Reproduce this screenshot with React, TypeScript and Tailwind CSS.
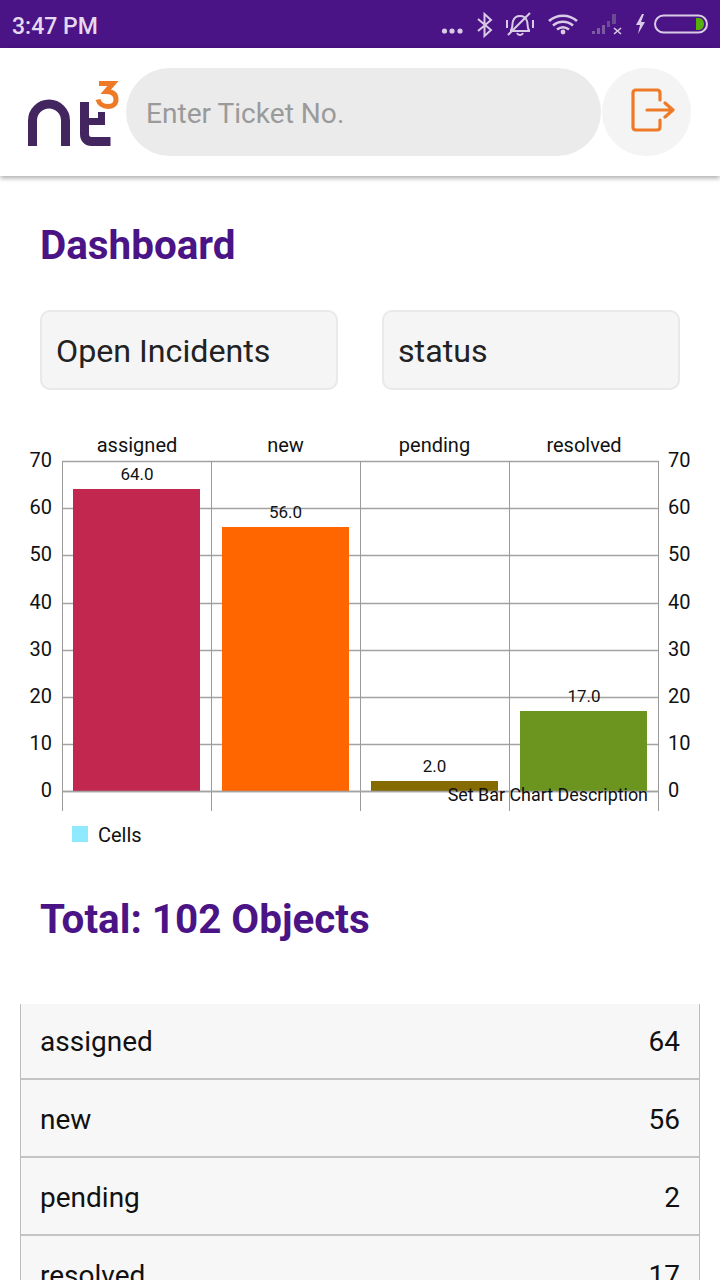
import React from "react";

const grid = [461, 508, 555, 603, 650, 697, 744, 791];
const vals = ["70", "60", "50", "40", "30", "20", "10", "0"];
const vlines = [62.5, 211.5, 360.5, 509.5, 658.5];
const cats = [
  { name: "assigned", cx: 137, x: 73, top: 489, color: "#c2284f", label: "64.0", ly: 480 },
  { name: "new", cx: 285.5, x: 222, top: 527, color: "#ff6600", label: "56.0", ly: 518 },
  { name: "pending", cx: 434.5, x: 371, top: 781, color: "#856a00", label: "2.0", ly: 772 },
  { name: "resolved", cx: 584, x: 520, top: 711, color: "#6b951f", label: "17.0", ly: 702 },
];
const rows: [string, string][] = [
  ["assigned", "64"],
  ["new", "56"],
  ["pending", "2"],
  ["resolved", "17"],
];

function StatusIcons() {
  return (
    <svg width="300" height="48" viewBox="420 0 300 48" fill="none" className="block shrink-0">
      <circle cx="444.5" cy="31" r="2.6" fill="#d9cbe6" />
      <circle cx="452" cy="31" r="2.6" fill="#d9cbe6" />
      <circle cx="460" cy="31" r="2.6" fill="#d9cbe6" />
      <path d="M478 19l13 11-6.500 6V14l6.500 6-13 11" stroke="#d9cbe6" strokeWidth="2" />
      <path d="M511 30c2-2 1-6 2-9 1-3 4-5 7-5s6 2 7 5c1 3 0 7 2 9v1h-18zM517 33c1 2.500 5 2.500 6 0" stroke="#d9cbe6" strokeWidth="2" />
      <path d="M508 35L530 13" stroke="#d9cbe6" strokeWidth="2" />
      <path d="M507 20v8M533 20v8" stroke="#d9cbe6" strokeWidth="2" />
      <path d="M549 21c8-7 20-7 28 0M553 25.500c6-5 14-5 20 0M557 29.500c4-3 8-3 12 0" stroke="#d9cbe6" strokeWidth="2.600" />
      <circle cx="563" cy="32" r="2.400" fill="#d9cbe6" />
      <path d="M592 34h3v-3h-3zM597 34h3v-6h-3zM602 34h3v-9h-3z" fill="#7a5aa0" />
      <path d="M607 27h3v-6h-3v6zM612 24h4v-10h-4z" fill="#6b4a94" />
      <path d="M614 28l7 6M621 28l-7 6" stroke="#d9cbe6" strokeWidth="1.600" />
      <path d="M642 14l-6 11h4l-2 9 7-12h-4l3-8z" fill="#d9cbe6" />
      <rect x="655" y="15.500" width="52" height="17" rx="8.500" stroke="#d9cbe6" strokeWidth="2" />
      <path d="M696 18h3c3 0 5 3 5 6s-2 6-5 6h-3z" fill="#56b00c" />
    </svg>
  );
}

function Logo() {
  return (
    <svg width="100" height="80" viewBox="26 72 100 80" fill="none" className="shrink-0">
      <path d="M32.500 146v-25.500a16.500 16.500 0 0 1 33 0V146" stroke="#43265f" strokeWidth="9" />
      <path d="M84.500 102v32c0 5 3 7.500 7 7.500h19" stroke="#43265f" strokeWidth="9" />
      <path d="M87 121.500h14.500V112" stroke="#43265f" strokeWidth="7" />
      <path d="M99 83.500h14l-7 8c7 0 10 3 10 8 0 5-4 7-8 7-5 0-9-3-10-7" stroke="#ee7a27" strokeWidth="5" />
    </svg>
  );
}

function Chart() {
  return (
    <svg width="720" height="430" viewBox="0 430 720 430" className="block" fontFamily="Roboto, sans-serif">
      {grid.map((y) => (
        <line key={y} x1="62" x2="659" y1={y + 0.5} y2={y + 0.5} stroke="#a3a3a3" strokeWidth="1.500" />
      ))}
      {vlines.map((x) => (
        <line key={x} x1={x} x2={x} y1="461" y2="811" stroke="#9a9a9a" strokeWidth="1" />
      ))}
      {cats.map((c) => (
        <rect key={c.name} x={c.x} y={c.top} width="127" height={791 - c.top} fill={c.color} />
      ))}
      <line x1="62" x2="659" y1="791.500" y2="791.500" stroke="#a3a3a3" strokeWidth="1.500" />
      {cats.map((c) => (
        <text key={c.name} x={c.cx} y="452" textAnchor="middle" fontSize="20" fill="#111">{c.name}</text>
      ))}
      {cats.map((c) => (
        <text key={c.name} x={c.cx} y={c.ly} textAnchor="middle" fontSize="17" fill="#111">{c.label}</text>
      ))}
      {grid.map((y, i) => (
        <text key={y} x="52" y={y + 6} textAnchor="end" fontSize="20" fill="#111">{vals[i]}</text>
      ))}
      {grid.map((y, i) => (
        <text key={y} x="668" y={y + 6} fontSize="20" fill="#111">{vals[i]}</text>
      ))}
      <text x="648" y="801" textAnchor="end" fontSize="17.900" fill="#111">Set Bar Chart Description</text>
      <rect x="72" y="826" width="16" height="16" fill="#8fe9ff" />
      <text x="98" y="842" fontSize="20" fill="#111">Cells</text>
    </svg>
  );
}

export default function App() {
  return (
    <div className="w-[720px] h-[1280px] overflow-hidden bg-white font-['Roboto',sans-serif]">
      <div className="h-12 bg-[#4a1486] flex items-center justify-between pl-3 overflow-hidden">
        <span className="pt-[6px] text-[23px] font-medium text-[#e4d9ee] whitespace-nowrap">3:47 PM</span>
        <StatusIcons />
      </div>

      <div className="relative h-32 bg-white flex items-center pl-[26px] shadow-[0_2px_5px_rgba(0,0,0,0.35)]">
        <Logo />
        <div className="w-[475px] h-[88px] rounded-[44px] bg-[#ebebeb] flex items-center pl-5 pt-[5px] text-[28.100px] text-[#9a9a9a]">
          Enter Ticket No.
        </div>
        <div className="w-[89px] h-[88px] ml-px rounded-full bg-[#f4f4f4] flex items-center justify-center">
          <svg width="44" height="44" viewBox="0 0 44 44" fill="none" stroke="#ee7a27" strokeWidth="3.200" strokeLinecap="round" strokeLinejoin="round" className="ml-3 mb-[5px]">
            <path d="M29 12V5c0-2-1-3-3-3H5C3 2 2 3 2 5v34c0 2 1 3 3 3h21c2 0 3-1 3-3v-7" />
            <path d="M16 22h26M34 15l8 7-8 7" />
          </svg>
        </div>
      </div>

      <div className="px-10 pt-[48px]">
        <h1 className="text-[40.400px] leading-[44px] font-bold text-[#4a1486]">Dashboard</h1>
        <div className="mt-[42px] flex justify-between">
          <div className="w-[298px] h-20 rounded-[10px] border-2 border-[#e9e9e9] bg-[#f5f5f5] flex items-center pl-[14px] pt-[2px] text-[32.200px] text-[#222]">
            Open Incidents
          </div>
          <div className="w-[298px] h-20 rounded-[10px] border-2 border-[#e9e9e9] bg-[#f5f5f5] flex items-center pl-[14px] pt-[2px] text-[32.200px] text-[#222]">
            status
          </div>
        </div>
      </div>

      <div className="mt-10">
        <Chart />
      </div>

      <h2 className="px-10 mt-[38px] text-[40.400px] leading-[44px] font-bold text-[#4a1486]">Total: 102 Objects</h2>

      <div className="mx-5 mt-[62px] border-x border-[#bdbdbd]">
        {rows.map(([k, v]) => (
          <div key={k} className="h-[78px] first:h-[76px] pt-[3px] first:pt-px bg-[#f7f7f7] border-b-2 border-[#c4c4c4] flex items-center justify-between px-[19px] text-[28px] text-[#111]">
            <span>{k}</span>
            <span>{v}</span>
          </div>
        ))}
      </div>
    </div>
  );
}
